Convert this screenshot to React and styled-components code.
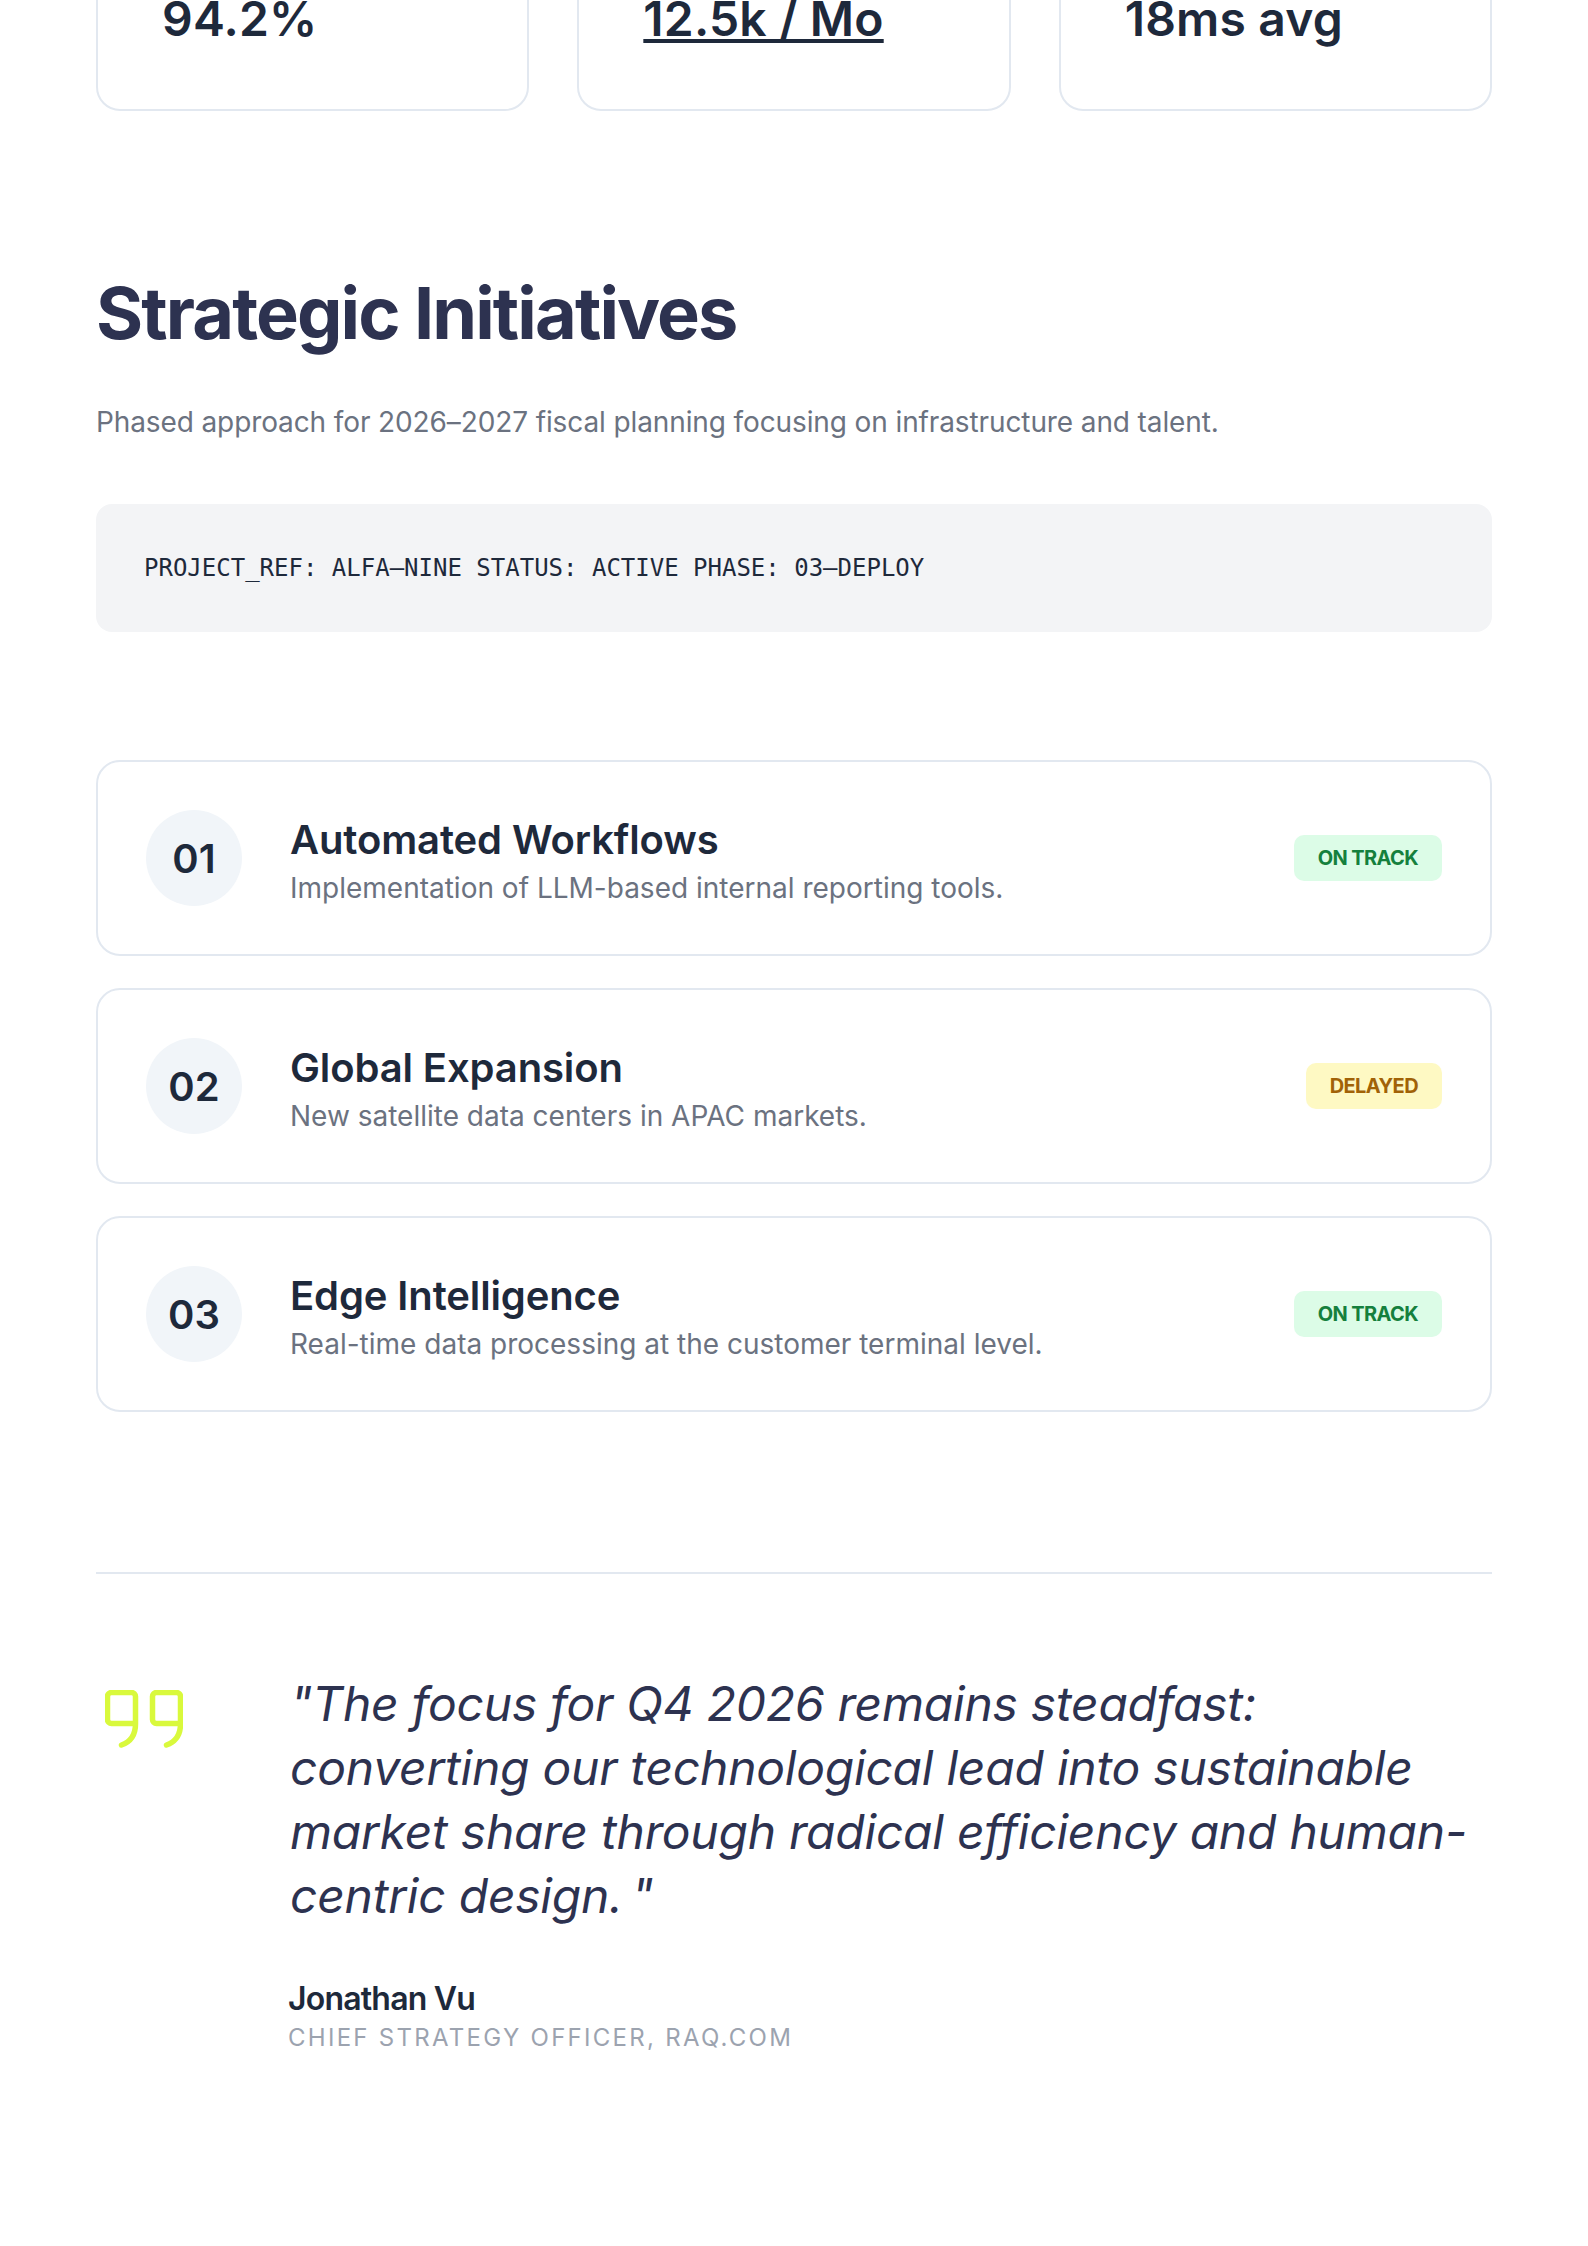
import React from 'react'
import styled, { createGlobalStyle } from 'styled-components'

const GlobalStyle = createGlobalStyle`
  html, body {
    margin: 0;
    padding: 0;
    background: #ffffff;
  }
  body {
    font-family: 'Inter', 'Noto Sans', sans-serif;
    overflow: hidden;
  }
  * {
    box-sizing: border-box;
  }
`

const metrics = [
  { id: 'a', value: '94.2%' },
  { id: 'b', value: '12.5k / Mo', underlined: true },
  { id: 'c', value: '18ms avg' },
]

const initiatives = [
  { num: '01', title: 'Automated Workflows', text: 'Implementation of LLM-based internal reporting tools.', status: 'ON TRACK' },
  { num: '02', title: 'Global Expansion', text: 'New satellite data centers in APAC markets.', status: 'DELAYED', delayed: true },
  { num: '03', title: 'Edge Intelligence', text: 'Real-time data processing at the customer terminal level.', status: 'ON TRACK' },
]

const QuoteMark = () => (
  <QuoteSvg viewBox="0 0 78 58" width="78" height="58" fill="none">
    <path d="M30.5 33.5H6.5a4 4 0 0 1-4-4V6.5a4 4 0 0 1 4-4h20a4 4 0 0 1 4 4V34c0 11-5.5 18-14 21" />
    <path d="M75.5 33.5H51.5a4 4 0 0 1-4-4V6.5a4 4 0 0 1 4-4h20a4 4 0 0 1 4 4V34c0 11-5.5 18-14 21" />
  </QuoteSvg>
)

export default function App() {
  return (
    <Page>
      <GlobalStyle />
      <Metrics>
        {metrics.map((m) => (
          <MetricCard key={m.id}>
            <MetricValue $underlined={m.underlined}>{m.value}</MetricValue>
          </MetricCard>
        ))}
      </Metrics>

      <Heading>Strategic Initiatives</Heading>
      <Subtitle>Phased approach for 2026–2027 fiscal planning focusing on infrastructure and talent.</Subtitle>
      <CodeBlock>PROJECT_REF: ALFA–NINE STATUS: ACTIVE PHASE: 03–DEPLOY</CodeBlock>

      <List>
        {initiatives.map((item) => (
          <Item key={item.num}>
            <Num>{item.num}</Num>
            <ItemBody>
              <ItemTitle>{item.title}</ItemTitle>
              <ItemText>{item.text}</ItemText>
            </ItemBody>
            <Badge $delayed={item.delayed}>{item.status}</Badge>
          </Item>
        ))}
      </List>

      <QuoteSection>
        <QuoteMark />
        <QuoteBody>
          <QuoteText>
            "The focus for Q4 2026 remains steadfast: converting our technological lead into sustainable market share
            through radical efficiency and human-centric design.{'\u2009'}"
          </QuoteText>
          <Author>Jonathan Vu</Author>
          <Role>CHIEF STRATEGY OFFICER, RAQ.COM</Role>
        </QuoteBody>
      </QuoteSection>
    </Page>
  )
}

const Page = styled.div`
  width: 1588px;
  height: 2246px;
  padding: 0 96px;
  overflow: hidden;
`

const Metrics = styled.div`
  display: grid;
  grid-template-columns: repeat(3, 1fr);
  gap: 48px;
  margin-top: -40px;
`

const MetricCard = styled.div`
  height: 151px;
  padding: 27px 64px 0;
  border: 2px solid #e2e8f0;
  border-radius: 24px;
`

const MetricValue = styled.span`
  font-size: 48px;
  line-height: 60px;
  font-weight: 600;
  letter-spacing: 0.004em;
  color: #1e293b;
  text-decoration: ${(props) => (props.$underlined ? 'underline' : 'none')};
`

const Heading = styled.h1`
  margin: 162px 0 0;
  font-size: 72px;
  line-height: 80px;
  font-weight: 700;
  letter-spacing: -0.026em;
  color: #2d3250;
`

const Subtitle = styled.p`
  margin: 49px 0 0;
  font-size: 28px;
  line-height: 40px;
  letter-spacing: -0.004em;
  color: #6b7280;
`

const CodeBlock = styled.div`
  margin-top: 62px;
  height: 128px;
  padding: 48px 48px 0;
  border-radius: 16px;
  background: #f3f4f6;
  font-family: 'DejaVu Sans Mono', monospace;
  font-size: 24px;
  line-height: 32px;
  color: #1e293b;
`

const List = styled.div`
  display: flex;
  flex-direction: column;
  gap: 32px;
  margin-top: 128px;
`

const Item = styled.div`
  display: flex;
  align-items: center;
  gap: 48px;
  height: 196px;
  padding: 0 48px;
  border: 2px solid #e2e8f0;
  border-radius: 24px;
`

const Num = styled.div`
  display: flex;
  align-items: center;
  justify-content: center;
  flex: none;
  width: 96px;
  height: 96px;
  border-radius: 50%;
  background: #f1f5f9;
  font-size: 40px;
  font-weight: 600;
  color: #1e293b;
`

const ItemBody = styled.div`
  flex: 1;
  min-width: 0;
  padding-top: 8px;
`

const ItemTitle = styled.div`
  font-size: 40px;
  line-height: 48px;
  font-weight: 600;
  letter-spacing: -0.003em;
  color: #1e293b;
`

const ItemText = styled.div`
  margin-top: 4px;
  font-size: 28px;
  line-height: 40px;
  color: #6b7280;
`

const Badge = styled.span`
  flex: none;
  align-self: center;
  padding: 0 24px;
  height: 46px;
  line-height: 46px;
  border-radius: 10px;
  font-size: 20px;
  font-weight: 700;
  letter-spacing: -0.03em;
  background: ${(props) => (props.$delayed ? '#fef9c3' : '#dcfce7')};
  color: ${(props) => (props.$delayed ? '#a16207' : '#15803d')};
`

const QuoteSection = styled.div`
  display: flex;
  margin-top: 160px;
  padding-top: 98px;
  border-top: 2px solid #e2e8f0;
`

const QuoteSvg = styled.svg`
  flex: none;
  margin: 18px 0 0 9px;
  stroke: #d9f93c;
  stroke-width: 5.5;
  stroke-linecap: round;
  stroke-linejoin: round;
`

const QuoteBody = styled.div`
  margin-left: 105px;
  flex: 1;
`

const QuoteText = styled.p`
  margin: 0;
  max-width: 1190px;
  padding-left: 2px;
  font-size: 48px;
  line-height: 64px;
  font-style: italic;
  letter-spacing: -0.005em;
  color: #2d3250;
`

const Author = styled.div`
  margin-top: 51px;
  font-size: 32px;
  line-height: 40px;
  font-weight: 600;
  letter-spacing: -0.025em;
  color: #1e293b;
`

const Role = styled.div`
  margin-top: 3px;
  font-size: 24px;
  line-height: 32px;
  letter-spacing: 0.095em;
  color: #9ca3af;
`
